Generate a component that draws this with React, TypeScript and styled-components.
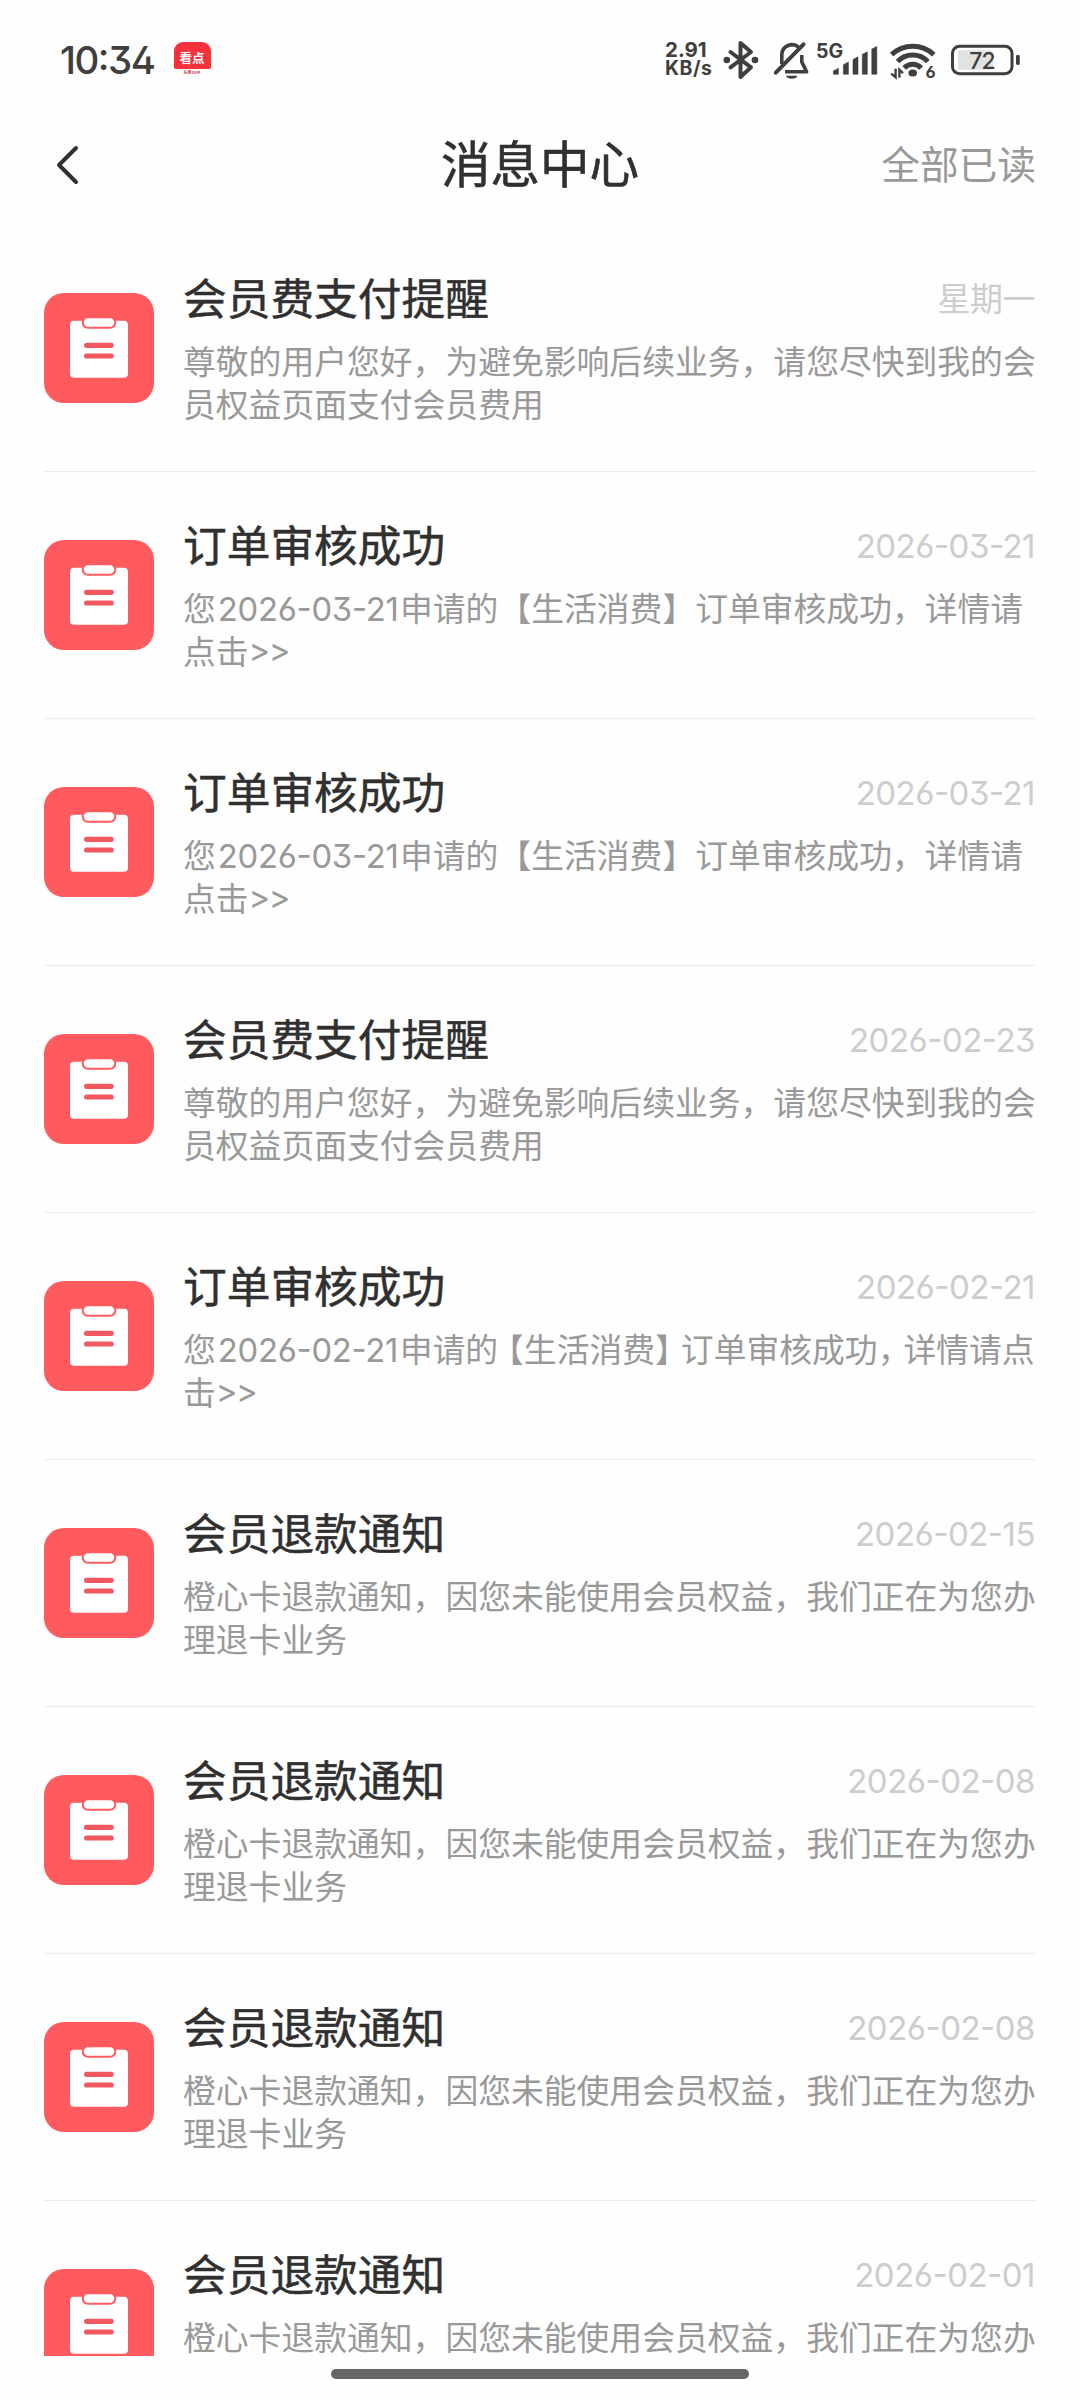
import React from "react";
import styled, { createGlobalStyle } from "styled-components";

const CJK = '"Noto Sans CJK SC", sans-serif';

const GlobalStyle = createGlobalStyle`
  * { box-sizing: border-box; }
  body { margin: 0; background: #fefefe; font-family: Inter, ${CJK}; }
`;

const Screen = styled.div`
  position: relative;
  width: 1080px;
  height: 2400px;
  overflow: hidden;
  display: flex;
  flex-direction: column;
  background: #fefefe;
`;

const StatusBar = styled.header`
  height: 120px;
  flex: none;
  display: flex;
  align-items: flex-start;
  justify-content: space-between;
  padding: 40px 60px 0;
  color: #3f3f3f;
`;

const StatusGroup = styled.div`
  display: flex;
  height: 40px;
`;

const Clock = styled.span`
  font: 500 38.5px/41px Inter, sans-serif;
  font-feature-settings: "ss01", "case";
  letter-spacing: -1.5px;
  width: 96px;
  white-space: nowrap;
`;

const AppBadge = styled.div`
  margin: 2px 0 0 17px;
  width: 38px;
  display: flex;
  flex-direction: column;
  align-items: center;
`;

const BadgeTop = styled.div`
  width: 37px;
  height: 27px;
  border-radius: 9px 9px 2px 2px;
  background: #f5323c;
  color: #fff;
  text-align: center;
  font: 700 12.5px/31px ${CJK};
`;

const BadgeFoot = styled.div`
  color: #c8404a;
  white-space: nowrap;
  font: 700 4px/7px ${CJK};
`;

const NetSpeed = styled.div`
  width: 58px;
  display: flex;
  flex-direction: column;
  white-space: nowrap;
`;

const NetValue = styled.span`
  font: 700 20.5px/19px Inter, sans-serif;
  letter-spacing: 0;
`;

const NetUnit = styled.span`
  font: 700 19.5px/19px Inter, sans-serif;
  letter-spacing: 0.5px;
`;

const StatusIcon = styled.svg<{ $gap?: number }>`
  display: block;
  flex: none;
  overflow: visible;
  margin-left: ${({ $gap = 0 }) => $gap}px;
  font-family: Inter, sans-serif;
  font-feature-settings: "ss01";
`;

const NavBar = styled.nav`
  height: 90px;
  flex: none;
  display: grid;
  grid-template-columns: 1fr auto 1fr;
  align-items: center;
  padding: 0 44px 0 54px;
`;

const PageTitle = styled.h1`
  margin: 0 0 7px;
  padding-right: 10px;
  font: 400 49.5px/72px ${CJK};
  -webkit-text-stroke: 0.6px #303030;
  color: #303030;
`;

const ReadAll = styled.button`
  justify-self: end;
  margin: 0 0 7px;
  padding: 0;
  border: 0;
  background: none;
  color: #999;
  font: 400 38.7px/56px ${CJK};
`;

const List = styled.main`
  height: 2146px;
  flex: none;
  overflow: hidden;
  padding: 15px 44px 0;
`;

const Row = styled.article`
  height: 247px;
  display: flex;
  align-items: center;
  gap: 29px;
  border-bottom: 1.5px solid #ececec;
`;

const RowIcon = styled.div`
  width: 110px;
  height: 110px;
  flex: none;
  border-radius: 20px;
  background: #ff5a5e;
`;

const RowBody = styled.div`
  flex: 1;
  min-width: 0;
  align-self: flex-start;
  padding-top: 39px;
`;

const RowHead = styled.div`
  display: flex;
  justify-content: space-between;
  align-items: center;
  height: 64px;
  margin-bottom: 13px;
`;

const RowTitle = styled.h2`
  margin: 0;
  font: 400 43.7px/64px ${CJK};
  -webkit-text-stroke: 0.5px #303030;
  color: #303030;
`;

const RowDate = styled.time`
  margin: 6px 1px 0 0;
  color: #cdcdcd;
  font: 400 33px/48px Inter, ${CJK};
  font-feature-settings: "ss01", "case";
  letter-spacing: -0.5px;
  white-space: nowrap;
`;

const Line = styled.p`
  margin: 0;
  color: #999;
  font: 400 32.8px/43px Inter, ${CJK};
  font-feature-settings: "ss01", "case";
  white-space: nowrap;
`;

const Digits = styled.span`
  margin: 0 1.5px 0 2px;
  letter-spacing: -0.25px;
`;

const Arrows = styled.span`
  letter-spacing: -1.5px;
`;

const Punct = styled.span<{ $before?: number; $after?: number }>`
  margin-left: ${({ $before = 0 }) => -$before}px;
  margin-right: ${({ $after = 0 }) => -$after}px;
`;

const HomeIndicator = styled.div`
  position: absolute;
  left: 331px;
  bottom: 21px;
  width: 418px;
  height: 10px;
  border-radius: 5px;
  background: #666;
`;

type Message = { title: string; date: string; lines: string[]; tight?: boolean };

const fee = {
  title: "会员费支付提醒",
  lines: ["尊敬的用户您好，为避免影响后续业务，请您尽快到我的会", "员权益页面支付会员费用"],
};
const refund = {
  title: "会员退款通知",
  lines: ["橙心卡退款通知，因您未能使用会员权益，我们正在为您办", "理退卡业务"],
};
const order = {
  title: "订单审核成功",
  lines: ["您2026-03-21申请的【生活消费】订单审核成功，详情请", "点击>>"],
};

const messages: Message[] = [
  { ...fee, date: "星期一" },
  { ...order, date: "2026-03-21" },
  { ...order, date: "2026-03-21" },
  { ...fee, date: "2026-02-23" },
  {
    title: "订单审核成功",
    date: "2026-02-21",
    lines: ["您2026-02-21申请的【生活消费】订单审核成功，详情请点", "击>>"],
    tight: true,
  },
  { ...refund, date: "2026-02-15" },
  { ...refund, date: "2026-02-08" },
  { ...refund, date: "2026-02-08" },
  { ...refund, date: "2026-02-01", lines: refund.lines.slice(0, 1) },
];

// Splits a string into CJK runs, digits, arrows and full-width punctuation;
// a tight line trims the blank half of its punctuation.
const Rich = ({ text, tight }: { text: string; tight?: boolean }) => (
  <>
    {text.split(/([0-9-]+|>+|[【】，])/).map((part, i) => {
      if (/^[0-9-]+$/.test(part)) return <Digits key={i}>{part}</Digits>;
      if (/^>+$/.test(part)) return <Arrows key={i}>{part}</Arrows>;
      if (tight && part === "【") return <Punct key={i} $before={7}>{part}</Punct>;
      if (tight && /^[】，]$/.test(part)) return <Punct key={i} $after={7}>{part}</Punct>;
      return part;
    })}
  </>
);

const Clipboard = () => (
  <svg width="110" height="110" viewBox="0 0 110 110" fill="none">
    <rect x="26" y="27.7" width="58" height="57" rx="4" fill="#fff" />
    <rect x="38.7" y="24.3" width="32.6" height="10.4" rx="5.2" fill="#fff" stroke="#ff5a5e" strokeWidth="2" />
    <path d="M42.6 52.3h24.6M42.6 63h24.6" stroke="#f2585f" strokeWidth="5.2" strokeLinecap="round" />
  </svg>
);

const INK = "#3f3f3f";

const BluetoothIcon = () => (
  <StatusIcon width="36" height="40" viewBox="723 40 36 40" fill="none">
    <path d="M730.5 52 751 67.3 740.5 77V43L751 52 730.5 67.3" stroke={INK} strokeWidth="4" strokeLinecap="round" strokeLinejoin="round" />
    <circle cx="726.8" cy="60" r="3.3" fill={INK} />
    <circle cx="755" cy="60" r="3.3" fill={INK} />
  </StatusIcon>
);

const MutedBellIcon = () => (
  <StatusIcon $gap={14} width="36" height="40" viewBox="773 40 36 40" fill="none">
    <path d="M781.8 64V54.5a10.2 10.2 0 0 1 17-7.2M801.8 55V62l4.8 9.8H785" stroke={INK} strokeWidth="3.6" strokeLinejoin="round" />
    <path d="M775.8 72.7 803.5 44.3" stroke={INK} strokeWidth="4" strokeLinecap="round" />
    <path d="M786 75.8h11.5a5.9 3.8 0 0 1-11.5 0Z" fill={INK} />
  </StatusIcon>
);

const bars = [
  [833.4, 68.5],
  [843.4, 62.3],
  [853, 57],
  [862.3, 52],
  [871.8, 46.7],
];

const SignalIcon = () => (
  <StatusIcon $gap={7} width="62" height="40" viewBox="816 40 62 40" fill={INK}>
    <text x="816" y="57.8" fontSize="19.5" fontWeight="700">5G</text>
    {bars.map(([x, y]) => (
      <path key={x} d={`M${x} ${y + 2.4}l5-2.6V74.2h-5Z`} stroke={INK} strokeWidth="0.6" strokeLinejoin="round" />
    ))}
  </StatusIcon>
);

const WifiIcon = () => (
  <StatusIcon $gap={11} width="48" height="40" viewBox="889 40 48 40" fill="none">
    <path d="M891.6 54.6a31 31 0 0 1 42.2 0M897.6 61.6a20.5 20.5 0 0 1 30.2 0M904.2 68a11.5 11.5 0 0 1 17 0" stroke={INK} strokeWidth="5" />
    <ellipse cx="912.7" cy="73" rx="4.3" ry="3.6" fill={INK} />
    <path d="M895.6 68.8v8.4l-4.4-3.6M899.4 77.8v-8l3.6 3.4" stroke={INK} strokeWidth="2.4" />
    <text x="925.6" y="77.6" fontSize="16.5" fontWeight="700" fill={INK}>6</text>
  </StatusIcon>
);

const BatteryIcon = () => (
  <StatusIcon $gap={12} width="71" height="40" viewBox="949 40 71 40" fill="none">
    <rect x="952.5" y="46.3" width="59.5" height="27.4" rx="7" stroke={INK} strokeWidth="3" />
    <rect x="958" y="50.3" width="35" height="19.4" rx="2.5" fill="#e2e2e2" />
    <rect x="1016" y="55" width="3.8" height="10" rx="1.4" fill={INK} />
    <text x="982" y="68.8" fontSize="23" fontWeight="500" letterSpacing="-0.8" textAnchor="middle" fill={INK}>72</text>
  </StatusIcon>
);

export default function App() {
  return (
    <Screen>
      <GlobalStyle />
      <StatusBar>
        <StatusGroup>
          <Clock>10:34</Clock>
          <AppBadge>
            <BadgeTop>看点</BadgeTop>
            <BadgeFoot>头条SVIP</BadgeFoot>
          </AppBadge>
        </StatusGroup>
        <StatusGroup>
          <NetSpeed>
            <NetValue>2.91</NetValue>
            <NetUnit>KB/s</NetUnit>
          </NetSpeed>
          <BluetoothIcon />
          <MutedBellIcon />
          <SignalIcon />
          <WifiIcon />
          <BatteryIcon />
        </StatusGroup>
      </StatusBar>
      <NavBar>
        <svg width="28" height="42" viewBox="0 0 28 42" fill="none">
          <path d="M22 4 5 21l17 17" stroke="#303030" strokeWidth="4" strokeLinecap="round" strokeLinejoin="round" />
        </svg>
        <PageTitle>消息中心</PageTitle>
        <ReadAll>全部已读</ReadAll>
      </NavBar>
      <List>
        {messages.map((m, i) => (
          <Row key={i}>
            <RowIcon>
              <Clipboard />
            </RowIcon>
            <RowBody>
              <RowHead>
                <RowTitle>{m.title}</RowTitle>
                <RowDate>{m.date}</RowDate>
              </RowHead>
              {m.lines.map((line) => (
                <Line key={line}>
                  <Rich text={line} tight={m.tight} />
                </Line>
              ))}
            </RowBody>
          </Row>
        ))}
      </List>
      <HomeIndicator />
    </Screen>
  );
}
